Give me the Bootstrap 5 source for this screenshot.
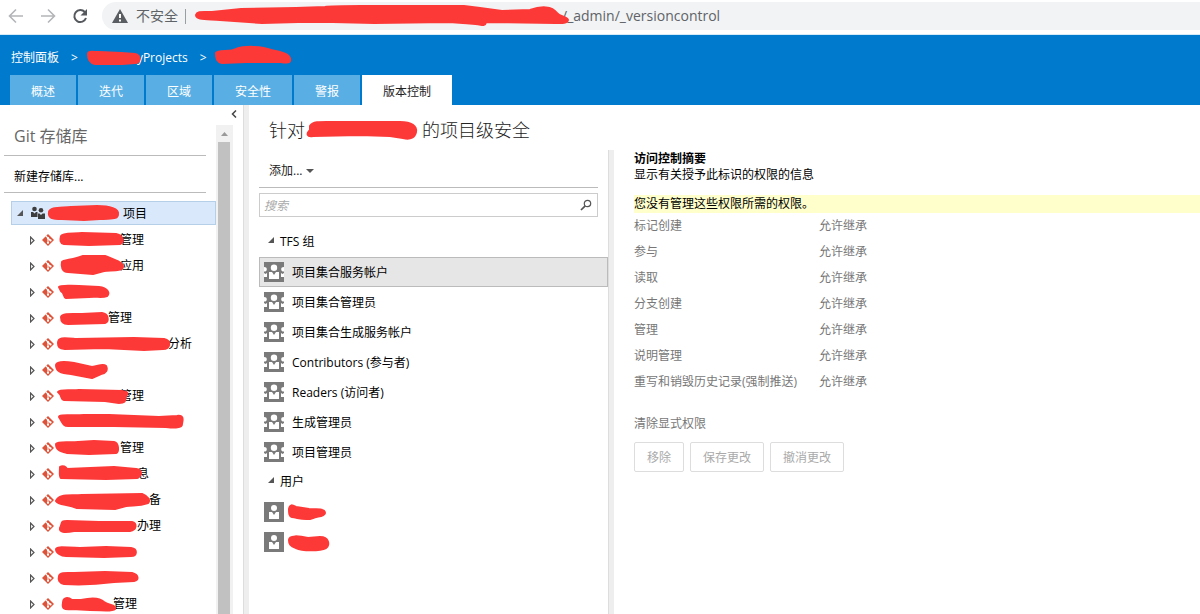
<!DOCTYPE html>
<html lang="zh-CN">
<head>
<meta charset="utf-8">
<meta name="viewport" content="width=device-width, initial-scale=1">
<title>版本控制</title>
<link href="https://cdn.jsdelivr.net/npm/bootstrap@5.3.0/dist/css/bootstrap.min.css" rel="stylesheet">
<style>
  body { font: 12px/16px "Open Sans", "Noto Sans CJK SC", sans-serif; color: #000; background: #fff; }
  a { color: inherit; text-decoration: none; }
  svg { flex: none; display: block; }
  .scrub { position: relative; overflow: visible; fill: #fd3938; stroke: #fd3938; stroke-width: 2; stroke-linejoin: round; }
  .browser-bar { height: 35px; padding: 2px 0 4px 8px; border-bottom: 1px solid #d5ecf8; }
  .address { margin-left: 14px; padding-left: 10px; background: #f1f3f4; border-radius: 14px 0 0 14px; color: #5f6368; font-size: 14px; }
  .address .rule { width: 1px; height: 15px; background: #9a9da1; margin: 0 10px 0 7px; }
  .hub-head { background: #007acc; color: #fff; padding-left: 10px; }
  .crumbs { height: 40px; padding: 5px 0 0 1px; }
  .crumb-sep { margin: 0 9px 0 12px; }
  .hub-tabs { gap: 2px; }
  .hub-tabs .nav-link { height: 30px; padding: 9px 21px 5px; line-height: 16px; color: #fff; background: #59afe4; border-radius: 0; }
  .hub-tabs .nav-link.active { color: #222; background: #fff; }
  .side { width: 243px; }
  .side-list { width: 216px; }
  .side-body { width: 206px; padding-left: 4px; }
  .side-title { height: 51px; padding: 21px 0 0 10px; font-size: 16px; line-height: 20px; font-weight: 400; color: #666; border-bottom: 1px solid #bbb; }
  .new-repo { height: 37px; padding: 13px 0 0 10px; border-bottom: 1px solid #bbb; }
  .tree { margin: 8px 0 0 11px; width: 205px; }
  .tree-root { height: 24px; margin-bottom: 2px; padding-left: 5px; background: #dae8fb; border: 1px solid #b5cfe9; }
  .tree-root a { padding-top: 2px; }
  .tree-row { height: 26px; padding-left: 19px; }
  .tree-row .git-mark { margin: 0 0 0 7px; }
  .tree-row .scrub { margin-right: 3px; }
  .scroller { width: 17px; margin-top: 20px; background: #f1f1f1; }
  .scroller .thumb { background: #c1c1c1; margin: 0 3px 0 2px; }
  .side-top { position: relative; }
  .collapse-btn { position: absolute; right: 4px; top: 3px; border: 0; background: none; padding: 2px; }
  .splitter { width: 6px; background: #eee; border-left: 1px solid #ddd; }
  .page-title { height: 45px; margin: 0; padding: 5px 0 0 20px; font-size: 18px; line-height: 20px; font-weight: 300; color: #222; }
  .identities { width: 359px; padding-left: 10px; }
  .add-menu { height: 38px; padding: 4px 0 0 10px; border: 0; border-bottom: 1px solid #bbb; background: none; margin-right: 10px; text-align: left; color: #222; }
  .search-box { height: 24px; margin: 5px 10px 10px 0; border: 1px solid #ccc; }
  .search-box input { border: 0; outline: 0; background: none; padding: 2px 4px 0; min-width: 0; }
  .search-box input::placeholder { color: #aaa; font-style: italic; }
  .search-box button { border: 0; background: none; padding: 0 5px; }
  .group-head { height: 30px; padding-left: 9px; }
  .group-head svg { margin: 0 6px 4px 0; }
  .who { height: 30px; padding-left: 4px; border: 1px solid transparent; }
  .who.chosen { background: #e6e6e6; border-color: #bbb; }
  .who a { margin-left: 8px; padding-top: 2px; }
  .summary { padding: 1px 0 0 20px; }
  .notice { margin: 12px 0 0; background: #ffffcc; height: 18px; line-height: 18px; }
  .perms { color: #777; }
  .perms td, .perms th { height: 26px; padding: 0; font-weight: 400; }
  .perms th { width: 185px; }
  .clear-link { color: #777; margin: 21px 0 10px; }
  .actions { gap: 6px; }
  .plain-btn { height: 30px; padding: 2px 12px 0; font-size: 12px; border: 1px solid #ddd; border-radius: 2px; color: #aaa; background: #fff; }
</style>
</head>
<body>
<svg width="0" height="0" class="position-absolute" aria-hidden="true">
  <symbol id="git" viewBox="0 0 12 12"><path fill="#dc5339" d="M6 0 12 6 6 12 0 6z"/><path d="M3.800 1.800 6 4v5M6.500 4.500 8.500 6.500" stroke="#fff" stroke-width="1.100" fill="none"/><circle cx="6" cy="8.800" r="1.100" fill="#fff"/><circle cx="8.500" cy="6.400" r="1.100" fill="#fff"/><circle cx="6" cy="4.200" r="1.100" fill="#fff"/></symbol>
  <symbol id="closed" viewBox="0 0 5 9"><path d="M.5 1 4 4.500.5 8z" fill="#fff" stroke="#555" stroke-width="1.200"/></symbol>
  <symbol id="open" viewBox="0 0 6 6"><path d="M6 0v6H0z" fill="#555"/></symbol>
  <symbol id="user" viewBox="0 0 20 20"><path fill="#7a7a7a" d="M0 0h20v20H0z"/><circle cx="10" cy="6" r="3" fill="#fff"/><path fill="#fff" d="M5 10h3l2 3 2-3h3v7H5z"/></symbol>
  <symbol id="group" viewBox="0 0 20 20"><path fill="#7a7a7a" d="M0 0h20v20H0z"/><circle cx="10" cy="5.800" r="3.200" fill="#fff"/><path fill="#fff" d="M5 10h3l2 3 2-3h3v7H5zM0 5c2 0 2.800.8 2.800 2.200S2 9.500 0 9.500zM20 5c-2 0-2.800.8-2.800 2.200s.8 2.300 2.800 2.300zM0 11l1.500 1L3 11v4H0zM20 11l-1.500 1-1.500-1v4h3z"/></symbol>
</svg>
<div class="d-flex flex-column vh-100 overflow-hidden">
  <div class="browser-bar d-flex">
    <div class="d-flex align-items-center gap-3">
      <svg width="16" height="16" viewBox="0 0 16 16" fill="none" stroke="#b3b5b8" stroke-width="1.600"><path d="M15 8H2M8 1.500 1.500 8 8 14.500"/></svg>
      <svg width="16" height="16" viewBox="0 0 16 16" fill="none" stroke="#b3b5b8" stroke-width="1.600"><path d="M1 8h13M8 1.500 14.500 8 8 14.500"/></svg>
      <svg width="16" height="16" viewBox="0 0 16 16"><path d="M12.800 4A6 6 0 1 0 14 10" fill="none" stroke="#55585c" stroke-width="2"/><path d="M15 1v6.500H8.500z" fill="#55585c"/></svg>
    </div>
    <div class="address d-flex align-items-center flex-grow-1">
      <svg width="16" height="14" viewBox="0 0 16 14"><path d="M8 0 16 14H0z" fill="#5a5d61"/><path d="M7 5h2v4H7zM7 10.500h2v2H7z" fill="#fff"/></svg>
      <span class="ms-2">不安全</span><span class="rule"></span>
      <svg class="scrub" width="366" height="28" viewBox="0 0 366 28"><path d="M0 13C1 9 6 10 16 10L45 7 100 6 129 5C135 4 150 4 165 4L268 4 284 6 306 9 334 8C345 4 356 4 361 11 363 15 371 14 372 18 371 22 364 21 359 21L291 20C288 21 291 23 286 23 276 21 265 21 252 20L178 21 137 20 102 20 66 21 24 18C10 17 0 18 0 13z"/></svg>
      <span>/_admin/_versioncontrol</span>
    </div>
  </div>
  <header class="hub-head">
    <nav class="crumbs d-flex align-items-center" aria-label="导航">
      <a href="#">控制面板</a><span class="crumb-sep">&gt;</span>
      <svg class="scrub" width="50" height="24" viewBox="0 0 50 24"><path d="M1 8C1 5 5 6 12 6L34 7 48 8C54 9 54 17 48 17L35 18 8 18C3 17 1 13 1 8z"/></svg>
      <a href="#">yProjects</a><span class="crumb-sep">&gt;</span>
      <svg class="scrub" width="77" height="26" viewBox="0 0 77 26"><path d="M0 8C2 5 15 7 20 4 28 1 46 1 55 5 65 7 74 9 74 14 75 18 70 18 65 17L30 17 6 18C1 17 0 14 0 8z"/></svg>
    </nav>
    <nav class="nav hub-tabs">
      <a class="nav-link" href="#">概述</a><a class="nav-link" href="#">迭代</a><a class="nav-link" href="#">区域</a><a class="nav-link" href="#">安全性</a><a class="nav-link" href="#">警报</a><a class="nav-link active" aria-current="page" href="#">版本控制</a>
    </nav>
  </header>
  <div class="d-flex flex-grow-1 overflow-hidden">
    <aside class="side side-top d-flex flex-shrink-0">
      <button class="collapse-btn" aria-label="折叠"><svg width="6" height="8" viewBox="0 0 6 8"><path d="M5 .5 1.500 4 5 7.500" fill="none" stroke="#444" stroke-width="1.500"/></svg></button>
      <div class="side-list flex-shrink-0">
        <div class="side-body">
          <h2 class="side-title m-0">Git 存储库</h2>
          <div class="new-repo"><a href="#">新建存储库...</a></div>
        </div>
        <div class="tree">
          <div class="tree-root d-flex align-items-center">
            <svg class="me-2" width="6" height="6"><use href="#open"/></svg>
            <svg width="14" height="14" viewBox="0 0 14 14" fill="#3d3d3d"><circle cx="3.500" cy="3" r="2.300"/><circle cx="10" cy="4.200" r="2.300"/><path d="M0 6h2l1.500 1.500L5 6h1.500v5H0zM7 7.500h1.500L10 9l1.500-1.500H14V13H7z"/></svg>
            <svg class="scrub" width="74" height="22" viewBox="0 0 74 22"><path d="M4 10C5 5 14 6 26 5L52 4C65 4 74 7 73 12 73 18 66 16 55 17L39 18 17 17C7 17 3 16 4 10z"/></svg>
            <a class="ms-1" href="#">项目</a>
          </div>
          <div class="tree-row d-flex align-items-center"><svg width="5" height="9"><use href="#closed"/></svg><svg class="git-mark" width="12" height="12"><use href="#git"/></svg><svg class="scrub" width="63" height="26"><path d="M7 9C8 6 20 7 28 6L62 7C69 8 71 16 66 17L35 18 10 17C6 16 6 13 7 9z"/></svg><a href="#">管理</a></div>
          <div class="tree-row d-flex align-items-center"><svg width="5" height="9"><use href="#closed"/></svg><svg class="git-mark" width="12" height="12"><use href="#git"/></svg><svg class="scrub" width="63" height="26"><path d="M8 9C9 7 19 7 29 3L51 3C60 7 69 9 69 14 68 18 58 17 50 18L39 21 14 19C8 19 7 13 8 9z"/></svg><a href="#">应用</a></div>
          <div class="tree-row d-flex align-items-center"><svg width="5" height="9"><use href="#closed"/></svg><svg class="git-mark" width="12" height="12"><use href="#git"/></svg><svg class="scrub" width="56" height="26"><path d="M5 8C6 6 15 7 25 7L45 8C54 9 56 14 53 17 48 19 42 17 35 18L12 19C9 18 11 14 7 12z"/></svg></div>
          <div class="tree-row d-flex align-items-center"><svg width="5" height="9"><use href="#closed"/></svg><svg class="git-mark" width="12" height="12"><use href="#git"/></svg><svg class="scrub" width="51" height="26"><path d="M7 12C8 8 18 9 28 9L48 8C55 9 55 17 51 18L14 19C8 19 7 16 7 12z"/></svg><a href="#">管理</a></div>
          <div class="tree-row d-flex align-items-center"><svg width="5" height="9"><use href="#closed"/></svg><svg class="git-mark" width="12" height="12"><use href="#git"/></svg><svg class="scrub" width="111" height="26"><path d="M4 12C4 6 10 7 22 8L80 7 110 8C118 10 116 18 109 18L90 19 50 17 11 18C5 17 4 16 4 12z"/></svg><a href="#">分析</a></div>
          <div class="tree-row d-flex align-items-center"><svg width="5" height="9"><use href="#closed"/></svg><svg class="git-mark" width="12" height="12"><use href="#git"/></svg><svg class="scrub" width="56" height="26"><path d="M2 8C3 4 14 5 20 6L38 10C45 9 49 6 52 9 54 13 52 16 47 17L38 21 17 17C6 16 2 14 2 8z"/></svg></div>
          <div class="tree-row d-flex align-items-center"><svg width="5" height="9"><use href="#closed"/></svg><svg class="git-mark" width="12" height="12"><use href="#git"/></svg><svg class="scrub" width="63" height="26"><path d="M4 9C6 6 17 8 25 7L68 8C75 9 74 11 72 13 71 18 72 20 65 20L51 18 10 17C6 16 9 13 4 9z"/></svg><a href="#">管理</a></div>
          <div class="tree-row d-flex align-items-center"><svg width="5" height="9"><use href="#closed"/></svg><svg class="git-mark" width="12" height="12"><use href="#git"/></svg><svg class="scrub" width="130" height="26"><path d="M5 8C5 5 17 7 30 6L55 6 105 8 123 7C130 6 129 11 128 15 128 19 121 19 112 18L60 17 14 17C9 17 9 14 5 8z"/></svg></div>
          <div class="tree-row d-flex align-items-center"><svg width="5" height="9"><use href="#closed"/></svg><svg class="git-mark" width="12" height="12"><use href="#git"/></svg><svg class="scrub" width="63" height="26"><path d="M2 9C4 6 15 8 24 7L40 6 60 7C65 8 65 17 62 18L35 19 13 18C6 16 2 15 2 9z"/></svg><a href="#">管理</a></div>
          <div class="tree-row d-flex align-items-center"><svg width="5" height="9"><use href="#closed"/></svg><svg class="git-mark" width="12" height="12"><use href="#git"/></svg><svg class="scrub" width="80" height="26"><path d="M6 6C9 4 12 6 13 8L60 6 82 8C88 9 89 14 83 17L52 18 7 17C5 16 6 10 6 6z"/></svg><a href="#">息</a></div>
          <div class="tree-row d-flex align-items-center"><svg width="5" height="9"><use href="#closed"/></svg><svg class="git-mark" width="12" height="12"><use href="#git"/></svg><svg class="scrub" width="92" height="26"><path d="M2 14C5 7 14 9 28 8L88 7C93 9 97 13 94 16 85 19 80 18 72 19L61 22 23 21C13 17 4 18 2 14z"/></svg><a href="#">备</a></div>
          <div class="tree-row d-flex align-items-center"><svg width="5" height="9"><use href="#closed"/></svg><svg class="git-mark" width="12" height="12"><use href="#git"/></svg><svg class="scrub" width="80" height="26"><path d="M6 15C9 9 6 8 13 8L45 9 78 9C83 10 83 17 76 18L50 18 20 18C10 20 5 19 6 15z"/></svg><a href="#">办理</a></div>
          <div class="tree-row d-flex align-items-center"><svg width="5" height="9"><use href="#closed"/></svg><svg class="git-mark" width="12" height="12"><use href="#git"/></svg><svg class="scrub" width="84" height="26"><path d="M2 10C3 7 13 9 26 9L52 8 77 9C84 10 83 17 77 17L50 18 12 17C7 17 2 14 2 10z"/></svg></div>
          <div class="tree-row d-flex align-items-center"><svg width="5" height="9"><use href="#closed"/></svg><svg class="git-mark" width="12" height="12"><use href="#git"/></svg><svg class="scrub" width="86" height="26"><path d="M5 11C6 7 13 8 20 8L51 7 78 8C85 10 85 15 80 16L60 17C45 19 25 20 10 19 5 18 4 15 5 11z"/></svg></div>
          <div class="tree-row d-flex align-items-center"><svg width="5" height="9"><use href="#closed"/></svg><svg class="git-mark" width="12" height="12"><use href="#git"/></svg><svg class="scrub" width="56" height="26"><path d="M9 12C9 6 14 6 18 9L27 9C36 7 46 7 50 11 56 15 62 14 61 18 58 21 48 19 36 19L18 18C9 19 8 17 9 12z"/></svg><a href="#">管理</a></div>
        </div>
      </div>
      <div class="scroller d-flex flex-column" aria-hidden="true">
        <svg width="17" height="17" viewBox="0 0 17 17"><path d="M5 11 8.500 7 12 11z" fill="#999"/></svg>
        <div class="thumb flex-grow-1"></div>
      </div>
    </aside>
    <div class="splitter flex-shrink-0"></div>
    <main class="flex-grow-1 d-flex flex-column">
      <h1 class="page-title d-flex align-items-center">针对<svg class="scrub" width="117" height="26" viewBox="0 0 117 26"><path d="M5 9C8 4 17 5 30 5L95 5C107 5 112 9 111 15 110 20 106 23 98 21L85 19 55 18 8 19C2 20 1 17 5 13z"/></svg>的项目级安全</h1>
      <div class="d-flex flex-grow-1">
        <section class="identities d-flex flex-column flex-shrink-0">
          <button class="add-menu d-flex align-items-center">添加...<svg class="ms-1" width="8" height="4" viewBox="0 0 8 4"><path d="M0 0h8L4 4z" fill="#555"/></svg></button>
          <div class="search-box d-flex align-items-center"><input class="flex-grow-1" type="text" placeholder="搜索" aria-label="搜索"><button aria-label="搜索"><svg width="12" height="12" viewBox="0 0 12 12" fill="none" stroke="#555"><circle cx="7.500" cy="4.500" r="3.200" stroke-width="1.200"/><path d="M5.200 6.800 1 11" stroke-width="1.700"/></svg></button></div>
          <div class="group-head d-flex align-items-center"><svg width="6" height="6"><use href="#open"/></svg><span>TFS 组</span></div>
          <div class="who chosen d-flex align-items-center"><svg width="20" height="20"><use href="#group"/></svg><a href="#">项目集合服务帐户</a></div>
          <div class="who d-flex align-items-center"><svg width="20" height="20"><use href="#group"/></svg><a href="#">项目集合管理员</a></div>
          <div class="who d-flex align-items-center"><svg width="20" height="20"><use href="#group"/></svg><a href="#">项目集合生成服务帐户</a></div>
          <div class="who d-flex align-items-center"><svg width="20" height="20"><use href="#group"/></svg><a href="#">Contributors (参与者)</a></div>
          <div class="who d-flex align-items-center"><svg width="20" height="20"><use href="#group"/></svg><a href="#">Readers (访问者)</a></div>
          <div class="who d-flex align-items-center"><svg width="20" height="20"><use href="#group"/></svg><a href="#">生成管理员</a></div>
          <div class="who d-flex align-items-center"><svg width="20" height="20"><use href="#group"/></svg><a href="#">项目管理员</a></div>
          <div class="group-head d-flex align-items-center"><svg width="6" height="6"><use href="#open"/></svg><span>用户</span></div>
          <div class="who d-flex align-items-center"><svg width="20" height="20"><use href="#user"/></svg><svg class="scrub" width="44" height="24" viewBox="0 0 44 24"><path d="M5 9C6 4 8 5 12 7L25 9C34 9 41 9 41 13 40 17 33 16 29 18 22 21 15 18 8 17 5 16 5 13 5 9z"/></svg></div>
          <div class="who d-flex align-items-center"><svg width="20" height="20"><use href="#user"/></svg><svg class="scrub" width="46" height="24" viewBox="0 0 46 24"><path d="M5 10C5 5 15 6 24 8L36 7C45 7 46 15 42 18 36 21 18 21 12 18 6 16 5 14 5 10z"/></svg></div>
        </section>
        <div class="splitter flex-shrink-0"></div>
        <section class="summary flex-grow-1">
          <div class="fw-bold">访问控制摘要</div>
          <div>显示有关授予此标识的权限的信息</div>
          <p class="notice">您没有管理这些权限所需的权限。</p>
          <table class="perms">
            <tbody>
              <tr><th scope="row">标记创建</th><td>允许继承</td></tr>
              <tr><th scope="row">参与</th><td>允许继承</td></tr>
              <tr><th scope="row">读取</th><td>允许继承</td></tr>
              <tr><th scope="row">分支创建</th><td>允许继承</td></tr>
              <tr><th scope="row">管理</th><td>允许继承</td></tr>
              <tr><th scope="row">说明管理</th><td>允许继承</td></tr>
              <tr><th scope="row">重写和销毁历史记录(强制推送)</th><td>允许继承</td></tr>
            </tbody>
          </table>
          <div class="clear-link"><a href="#">清除显式权限</a></div>
          <div class="actions d-flex">
            <button class="plain-btn" disabled>移除</button><button class="plain-btn" disabled>保存更改</button><button class="plain-btn" disabled>撤消更改</button>
          </div>
        </section>
      </div>
    </main>
  </div>
</div>
<script src="https://cdn.jsdelivr.net/npm/bootstrap@5.3.0/dist/js/bootstrap.bundle.min.js"></script>
</body>
</html>
